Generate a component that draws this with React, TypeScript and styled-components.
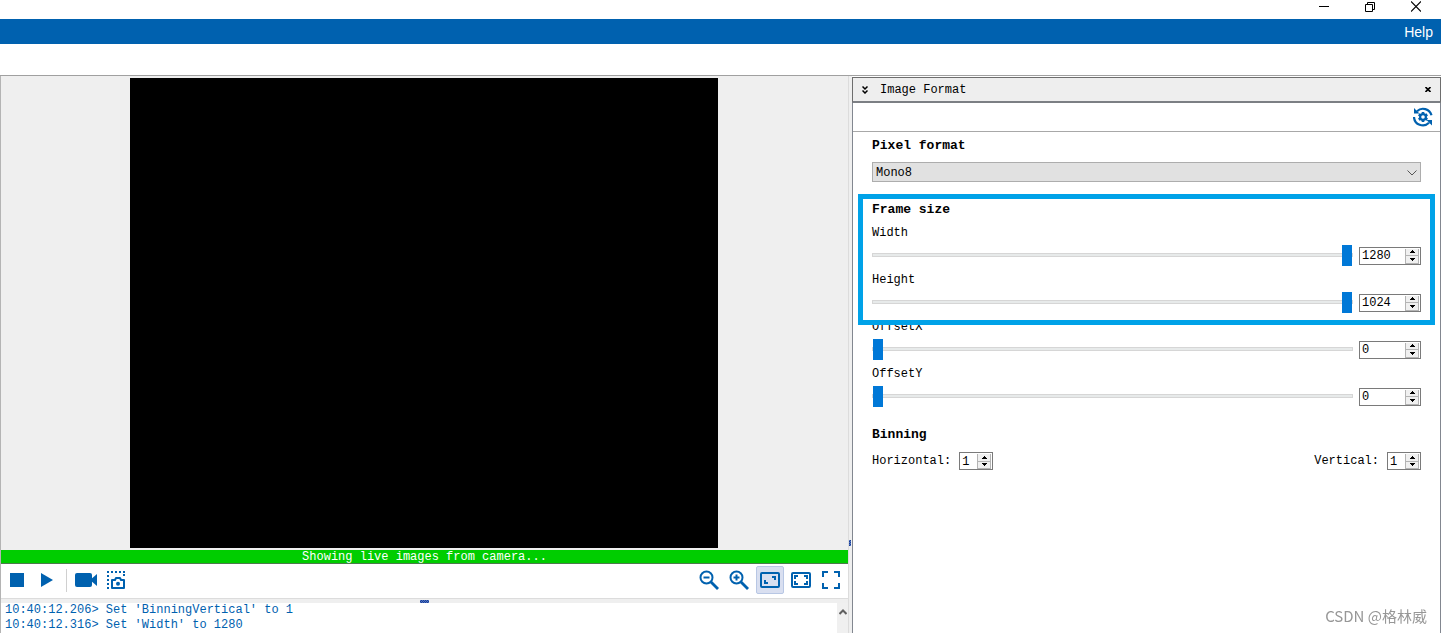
import React, { useId, useState } from "react";
import styled, { createGlobalStyle, css } from "styled-components";

const blue = "#0061af";
const mono = '"Liberation Mono", "Noto Sans CJK SC", monospace';

const GlobalStyle = createGlobalStyle`
  *, *::before, *::after { box-sizing: border-box; }
  body {
    margin: 0;
    background: #fff;
    color: #000;
    font: 12px/16px ${mono};
  }
  button, input, select { font: inherit; color: inherit; margin: 0; border-radius: 0; }
  h2, h3, p { margin: 0; }
`;

const Window = styled.div`
  display: flex;
  flex-direction: column;
  height: 100vh;
  overflow: hidden;
`;

const PlainButton = styled.button`
  display: flex;
  align-items: center;
  justify-content: center;
  padding: 0;
  border: 0;
  background: none;
`;

const TitleBar = styled.header`
  display: flex;
  justify-content: flex-end;
  flex: none;
  height: 19px;
  padding: 0 2px 6px 0;
`;

const CaptionButton = styled(PlainButton)`
  width: 46px;
  height: 13px;
`;

const MenuBar = styled.nav`
  display: flex;
  align-items: center;
  justify-content: flex-end;
  flex: none;
  height: 25px;
  padding: 0 8px;
  background: ${blue};
`;

const MenuItem = styled(PlainButton)`
  color: #fff;
  font: 14px/20px "Liberation Sans", sans-serif;
`;

const ToolStrip = styled.div`
  flex: none;
  height: 32px;
  border-bottom: 1px solid #a0a0a0;
`;

const Workspace = styled.main`
  display: grid;
  grid-template-columns: minmax(0, 848fr) 4px minmax(0, 589fr);
  flex: 1;
  min-height: 0;
`;

const CameraPane = styled.section`
  display: flex;
  flex-direction: column;
  min-height: 0;
  border-left: 1px solid #b4b4b4;
`;

const Viewer = styled.div`
  display: flex;
  justify-content: center;
  flex: 1;
  min-height: 0;
  padding: 2px 2px 2px 0;
  background: #efefef;
`;

const LiveImage = styled.div`
  height: 100%;
  aspect-ratio: 588 / 470;
  background: #000;
`;

const StatusBar = styled.p`
  flex: none;
  height: 14px;
  border-bottom: 1px solid #4c7a4c;
  background: #00cd00;
  color: #fff;
  line-height: 14px;
  text-align: center;
`;

const Toolbar = styled.div`
  display: flex;
  align-items: center;
  flex: none;
  height: 34px;
  padding: 0 2px 2px 1px;
`;

const ToolButton = styled(PlainButton)<{ $active?: boolean }>`
  width: 30px;
  height: 28px;
  color: ${blue};
  ${(p) =>
    p.$active &&
    css`
      width: 28px;
      border: 1px solid #b8c7e4;
      border-radius: 2px;
      background: #d9dff0;
    `}
`;

const ToolDivider = styled.span`
  width: 1px;
  height: 23px;
  margin: 0 4px;
  background: #d0d0d0;
`;

const ToolGroup = styled.div<{ $gap: number }>`
  display: flex;
  align-items: center;
  gap: ${(p) => p.$gap}px;
`;

const Spacer = styled.span`
  flex: 1;
`;

const HorizontalSplitter = styled.div`
  display: flex;
  align-items: center;
  justify-content: center;
  flex: none;
  height: 5px;
  border-top: 1px solid #dcdcdc;
  background: #efefef;
`;

const Grip = styled.span<{ $vertical?: boolean }>`
  width: ${(p) => (p.$vertical ? 2 : 9)}px;
  height: ${(p) => (p.$vertical ? 6 : 3)}px;
  background: repeating-conic-gradient(#1c3f94 0 25%, #4f74c4 0 50%) 0 0 / 2px 2px;
`;

const LogPane = styled.div`
  display: flex;
  flex: none;
  height: 30px;
`;

const LogLines = styled.div`
  flex: 1;
  padding-left: 4px;
  color: ${blue};
  line-height: 15px;
  white-space: pre;
`;

const ScrollTrack = styled.div`
  width: 11px;
  padding-top: 5px;
  background: #f0f0f0;
`;

const ScrollButton = styled(PlainButton)`
  width: 11px;
  height: 8px;
`;

const VerticalSplitter = styled.div`
  display: flex;
  align-items: center;
  padding-top: 376px;
  border-left: 1px solid #dcdcdc;
  background: #efefef;
`;

const SettingsPane = styled.section`
  display: flex;
  flex-direction: column;
  min-height: 0;
  margin-top: 1px;
  border: solid #828790;
  border-width: 0 1px;
`;

const PaneHeader = styled.header`
  display: flex;
  align-items: center;
  gap: 12px;
  flex: none;
  height: 26px;
  margin: 0 -1px;
  padding: 0 9px;
  border: 1px solid #6e6e6e;
  border-bottom: 2px solid #7c7f84;
  background: #eee;
`;

const PaneTitle = styled.h2`
  flex: 1;
  font: inherit;
`;

const PaneTools = styled.div`
  display: flex;
  align-items: center;
  justify-content: flex-end;
  flex: none;
  height: 29px;
  padding-right: 7px;
  border-bottom: 1px solid #a8a8a8;
  color: ${blue};
`;

const SettingsForm = styled.form`
  padding: 5px 19px 0;
`;

const Group = styled.div`
  position: relative;
`;

const GroupTitle = styled.h3`
  font-size: 13px;
  font-weight: bold;
  line-height: 18px;
`;

const PixelSelectBox = styled.div`
  position: relative;
  margin: 7px 0 19px;
  svg {
    position: absolute;
    top: 8px;
    right: 4px;
    pointer-events: none;
  }
`;

const PixelSelect = styled.select`
  display: block;
  width: 100%;
  height: 20px;
  padding: 1px 3px 0;
  border: 1px solid #adadad;
  background: #e1e1e1;
  appearance: none;
`;

const Field = styled.div`
  padding-top: 6px;
`;

const FieldLabel = styled.label`
  display: block;
`;

const SliderRow = styled.div`
  display: flex;
  gap: 6px;
  height: 21px;
  margin-top: 4px;
`;

const Slider = styled.input`
  flex: 1;
  min-width: 0;
  height: 20px;
  appearance: none;
  background: none;
  &::-webkit-slider-runnable-track {
    height: 4px;
    border: 1px solid #d6d6d6;
    background: #e7eaea;
  }
  &::-webkit-slider-thumb {
    width: 10px;
    height: 21px;
    margin-top: -9px;
    appearance: none;
    background: #0078d7;
  }
`;

const SpinFrame = styled.span<{ $small?: boolean }>`
  display: flex;
  align-self: center;
  flex: none;
  width: ${(p) => (p.$small ? 34 : 62)}px;
  height: 18px;
  border: 1px solid #7a7a7a;
  background: #fff;
`;

const SpinInput = styled.input`
  flex: 1;
  width: 0;
  padding: 1px 0 0 2px;
  border: 0;
  outline: 0;
  background: none;
  appearance: textfield;
  &::-webkit-inner-spin-button { appearance: none; }
`;

const SpinButtons = styled.span`
  display: flex;
  flex-direction: column;
  width: 15px;
  padding: 1px 1px 0 0;
`;

const SpinButton = styled(PlainButton)`
  flex: 1;
  border: 1px solid #b4b4b4;
  border-top: 0;
  background: #f0f0f0;
`;

const Annotation = styled.div`
  position: absolute;
  inset: -7px -14px -12px;
  z-index: 1;
  border: 5px solid #00a2e8;
  pointer-events: none;
`;

const BinningGroup = styled(Group)`
  margin-top: 19px;
`;

const BinningRow = styled.div`
  display: flex;
  justify-content: space-between;
  margin-top: 8px;
`;

const InlineField = styled.div`
  display: flex;
  align-items: center;
  gap: 8px;
`;

const Watermark = styled.span`
  position: fixed;
  right: 14px;
  bottom: 6px;
  color: #979797;
  font: 15px/22px "Noto Sans CJK SC", sans-serif;
  pointer-events: none;
`;

function SpinBox({ id, label, value, onChange, max, small }: {
  id?: string;
  label: string;
  value: number;
  onChange: (v: number) => void;
  max: number;
  small?: boolean;
}) {
  const step = (d: number) => onChange(Math.min(max, Math.max(0, value + d)));
  return (
    <SpinFrame $small={small}>
      <SpinInput id={id} aria-label={label} type="number" value={value} onChange={(e) => onChange(Number(e.target.value))} />
      <SpinButtons>
        <SpinButton type="button" aria-label={`Increase ${label}`} onClick={() => step(1)}>
          <svg width="5" height="3" viewBox="0 0 5 3" shapeRendering="crispEdges"><path d="M2 0h1v1h1v1h1v1H0V2h1V1h1z" /></svg>
        </SpinButton>
        <SpinButton type="button" aria-label={`Decrease ${label}`} onClick={() => step(-1)}>
          <svg width="5" height="3" viewBox="0 0 5 3" shapeRendering="crispEdges"><path d="M0 0h5v1H4v1H3v1H2V2H1V1H0z" /></svg>
        </SpinButton>
      </SpinButtons>
    </SpinFrame>
  );
}

function SliderField({ label, initial, max }: { label: string; initial: number; max: number }) {
  const [value, setValue] = useState(initial);
  const id = useId();
  return (
    <Field>
      <FieldLabel htmlFor={id}>{label}</FieldLabel>
      <SliderRow>
        <Slider id={id} type="range" min={0} max={max} value={value} onChange={(e) => setValue(Number(e.target.value))} />
        <SpinBox label={label} value={value} onChange={setValue} max={max} />
      </SliderRow>
    </Field>
  );
}

function BinningField({ label }: { label: string }) {
  const [value, setValue] = useState(1);
  const id = useId();
  return (
    <InlineField>
      <label htmlFor={id}>{label}:</label>
      <SpinBox id={id} label={label} value={value} onChange={setValue} max={4} small />
    </InlineField>
  );
}

function Magnifier({ plus }: { plus?: boolean }) {
  return (
    <svg width="20" height="20" viewBox="0 0 20 20" fill="none" stroke="currentColor" strokeWidth="2">
      <circle cx="7.500" cy="7.500" r="6" />
      <path d="M4.500 7.500h6" />
      {plus && <path d="M7.500 4.500v6" />}
      <path d="M12 12l7 7" strokeWidth="2.800" />
    </svg>
  );
}

function RefreshGear() {
  return (
    <svg width="20" height="20" viewBox="0 0 20 20" fill="none" stroke="currentColor">
      <path d="M4 4.200A8.800 8.800 0 0 1 18.500 8.200M16 15.800A8.800 8.800 0 0 1 1 10" strokeWidth="2.200" />
      <path d="M1 1v5.500h5.500zM19 18.500V13h-5.500z" fill="currentColor" stroke="none" />
      <circle cx="10" cy="10" r="2.900" strokeWidth="2.200" />
      <path
        d="M10 5v1.600M10 13.400v1.600M5.700 7.500l1.400.8M12.900 11.700l1.400.8M5.700 12.500l1.400-.8M12.900 8.300l1.400-.8"
        strokeWidth="2.600"
      />
    </svg>
  );
}

export default function App() {
  return (
    <Window>
      <GlobalStyle />
      <TitleBar>
        <CaptionButton aria-label="Minimize">
          <svg width="10" height="11" viewBox="0 0 10 11"><path d="M0 5h10v1H0z" /></svg>
        </CaptionButton>
        <CaptionButton aria-label="Restore">
          <svg width="10" height="11" viewBox="0 0 10 11" fill="none" stroke="#000">
            <path d="M.5 3.500h7v7h-7zM2.500 3.500v-2h7v7h-2" />
          </svg>
        </CaptionButton>
        <CaptionButton aria-label="Close">
          <svg width="10" height="11" viewBox="0 0 10 11" fill="none" stroke="#000" strokeWidth="1.200"><path d="M0 .5l10 10M10 .5l-10 10" /></svg>
        </CaptionButton>
      </TitleBar>
      <MenuBar>
        <MenuItem>Help</MenuItem>
      </MenuBar>
      <ToolStrip />
      <Workspace>
        <CameraPane>
          <Viewer>
            <LiveImage role="img" aria-label="Live camera image" />
          </Viewer>
          <StatusBar>Showing live images from camera...</StatusBar>
          <Toolbar>
            <ToolButton aria-label="Stop">
              <svg width="14" height="14" viewBox="0 0 14 14"><path fill="currentColor" d="M0 0h14v14H0z" /></svg>
            </ToolButton>
            <ToolButton aria-label="Play">
              <svg width="12" height="14" viewBox="0 0 12 14"><path fill="currentColor" d="M0 0l12 7L0 14z" /></svg>
            </ToolButton>
            <ToolDivider />
            <ToolButton aria-label="Record video">
              <svg width="22" height="14" viewBox="0 0 22 14" fill="currentColor">
                <rect width="17" height="14" rx="2" />
                <path d="M15 7l7-6v12z" />
              </svg>
            </ToolButton>
            <ToolButton aria-label="Take snapshot">
              <svg width="18" height="18" viewBox="0 0 18 18" fill="none" stroke="currentColor" strokeWidth="2">
                <path d="M0 1h18" strokeDasharray="2 2" />
                <path d="M1 4v14M17 3v3" strokeDasharray="2 2" />
                <path d="M5 9h3l1-2h4l1 2h3v8H5z" strokeLinejoin="round" />
                <circle cx="11" cy="12.800" r="2" fill="currentColor" stroke="none" />
              </svg>
            </ToolButton>
            <Spacer />
            <ToolGroup $gap={2}>
              <ToolGroup $gap={0}>
                <ToolButton aria-label="Zoom out"><Magnifier /></ToolButton>
                <ToolButton aria-label="Zoom in"><Magnifier plus /></ToolButton>
              </ToolGroup>
              <ToolButton aria-label="Fit to window" $active>
                <svg width="20" height="16" viewBox="0 0 20 16" fill="none" stroke="currentColor" strokeWidth="2">
                  <rect x="1" y="1" width="18" height="14" rx="1" />
                  <path d="M12 5h3v3M5 8v3h3" />
                </svg>
              </ToolButton>
              <ToolGroup $gap={0}>
                <ToolButton aria-label="Original size">
                  <svg width="20" height="16" viewBox="0 0 20 16" fill="none" stroke="currentColor" strokeWidth="2">
                    <rect x="1" y="1" width="18" height="14" rx="1" />
                    <path d="M4 7V4h3M13 4h3v3M16 9v3h-3M7 12H4V9" />
                  </svg>
                </ToolButton>
                <ToolButton aria-label="Full screen">
                  <svg width="18" height="18" viewBox="0 0 18 18" fill="none" stroke="currentColor" strokeWidth="2">
                    <path d="M1 6V1h5M12 1h5v5M17 12v5h-5M6 17H1v-5" />
                  </svg>
                </ToolButton>
              </ToolGroup>
            </ToolGroup>
          </Toolbar>
          <HorizontalSplitter><Grip /></HorizontalSplitter>
          <LogPane>
            <LogLines>
              <p>{"10:40:12.206> Set 'BinningVertical' to 1"}</p>
              <p>{"10:40:12.316> Set 'Width' to 1280"}</p>
            </LogLines>
            <ScrollTrack>
              <ScrollButton aria-label="Scroll up">
                <svg width="8" height="6" viewBox="0 0 8 6" fill="none" stroke="#606060" strokeWidth="2"><path d="M.5 5L4 1.500 7.500 5" /></svg>
              </ScrollButton>
            </ScrollTrack>
          </LogPane>
        </CameraPane>
        <VerticalSplitter><Grip $vertical /></VerticalSplitter>
        <SettingsPane>
          <PaneHeader>
            <PlainButton aria-label="Collapse">
              <svg width="6" height="8" viewBox="0 0 6 8" fill="none" stroke="#000" strokeWidth="1.500"><path d="M.5 .5L3 3 5.500 .5M.5 4.500L3 7l2.500-2.500" /></svg>
            </PlainButton>
            <PaneTitle>Image Format</PaneTitle>
            <PlainButton aria-label="Close pane">
              <svg width="6" height="5" viewBox="0 0 6 5" fill="none" stroke="#000" strokeWidth="1.600"><path d="M.5 0l5 5M5.500 0l-5 5" /></svg>
            </PlainButton>
          </PaneHeader>
          <PaneTools>
            <PlainButton aria-label="Refresh settings"><RefreshGear /></PlainButton>
          </PaneTools>
          <SettingsForm>
            <Group>
              <GroupTitle>Pixel format</GroupTitle>
              <PixelSelectBox>
                <PixelSelect aria-label="Pixel format" defaultValue="Mono8">
                  <option>Mono8</option>
                </PixelSelect>
                <svg width="10" height="6" viewBox="0 0 10 6" fill="none" stroke="#555"><path d="M.5 .5L5 5 9.500 .5" /></svg>
              </PixelSelectBox>
            </Group>
            <Group>
              <GroupTitle>Frame size</GroupTitle>
              <SliderField label="Width" initial={1280} max={1280} />
              <SliderField label="Height" initial={1024} max={1024} />
              <Annotation />
            </Group>
            <SliderField label="OffsetX" initial={0} max={1280} />
            <SliderField label="OffsetY" initial={0} max={1024} />
            <BinningGroup>
              <GroupTitle>Binning</GroupTitle>
              <BinningRow>
                <BinningField label="Horizontal" />
                <BinningField label="Vertical" />
              </BinningRow>
            </BinningGroup>
          </SettingsForm>
        </SettingsPane>
      </Workspace>
      <Watermark>CSDN @格林威</Watermark>
    </Window>
  );
}
